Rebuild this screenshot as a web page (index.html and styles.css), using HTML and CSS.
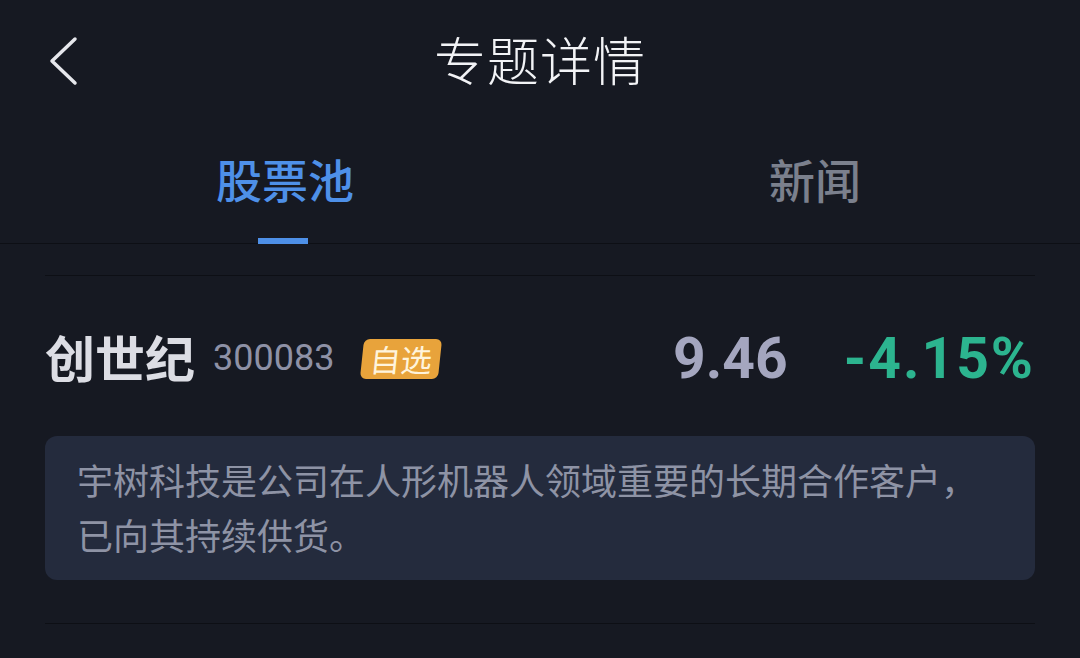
FILE: index.html
```html
<!DOCTYPE html>
<html lang="zh-CN">
<head>
    <meta charset="UTF-8">
    <meta name="viewport" content="width=device-width, initial-scale=1.0">
    <title>专题详情</title>
    <link rel="stylesheet" href="styles.css">
</head>
<body>

    <header class="topbar">
        <a class="back" href="#">
            <svg width="32" height="50" viewBox="0 0 32 50">
                <path d="M28 3 L5 25 L28 47" fill="none" stroke="#e6e7ec" stroke-width="3.5" stroke-linecap="round" stroke-linejoin="round"/>
            </svg>
        </a>
        <h1>专题详情</h1>
    </header>

    <nav class="tabs">
        <div class="tab active">股票池</div>
        <div class="tab">新闻</div>
    </nav>

    <section class="pool">
        <div class="stock">
            <div class="stock-name">
                <span class="name">创世纪</span>
                <span class="code">300083</span>
                <span class="badge">自选</span>
            </div>
            <div class="stock-quote">
                <span class="price">9.46</span>
                <span class="change">-4.15%</span>
            </div>
        </div>
        <div class="reason">
            宇树科技是公司在人形机器人领域重要的长期合作客户，<br>已向其持续供货。
        </div>
    </section>

</body>
</html>
```

FILE: styles.css
```css
body {
    margin: 0;
    background-color: #161922;
    font-family: "Noto Sans CJK SC", "Noto Sans", sans-serif;
    width: 1080px;
    height: 658px;
    overflow: hidden;
}
.topbar {
    height: 122px;
    display: flex;
    align-items: center;
    justify-content: center;
    position: relative;
}
.back {
    position: absolute;
    left: 47px;
    top: 36px;
    display: block;
}
.topbar h1 {
    margin: 0;
    margin-top: -6px;
    font-size: 52px;
    font-weight: 300;
    color: #f2f3f6;
    letter-spacing: 1px;
}
.tabs {
    display: flex;
    height: 121px;
    padding-left: 20px;
    border-bottom: 1px solid #0d0f15;
}
.tab {
    flex: 1;
    text-align: center;
    font-size: 46px;
    font-weight: 500;
    color: #7b808d;
    padding-top: 23px;
    position: relative;
}
.tab.active {
    color: #4e90e8;
}
.tab.active::after {
    content: "";
    position: absolute;
    left: 238px;
    bottom: -1px;
    width: 50px;
    height: 6px;
    background: #4e90e8;
}
.pool {
    margin: 31px 45px 0;
    border-top: 1px solid #0d0f15;
    border-bottom: 1px solid #0d0f15;
    padding-bottom: 43px;
}
.stock {
    display: flex;
    justify-content: space-between;
    align-items: center;
    height: 160px;
}
.stock-name {
    display: flex;
    align-items: center;
}
.name {
    font-size: 50px;
    font-weight: 700;
    color: #dcdde4;
}
.code {
    font-family: Roboto, "Noto Sans", sans-serif;
    font-size: 36px;
    color: #8e91a6;
    margin-left: 18px;
    margin-top: 4px;
}
.badge {
    margin-left: 28px;
    margin-top: 6px;
    background: #e8a33b;
    color: #fff4dc;
    font-size: 31px;
    line-height: 40px;
    padding: 0 8px;
    border-radius: 6px;
    transform: skewX(-6deg);
}
.stock-quote {
    display: flex;
    align-items: center;
    font-family: Roboto, "Noto Sans", sans-serif;
    font-weight: 700;
    font-size: 57px;
    margin-top: 4px;
}
.price {
    color: #a4a6bf;
}
.change {
    color: #2cb48f;
    margin-left: 56px;
    letter-spacing: 2px;
}
.reason {
    background: #242b3d;
    border-radius: 12px;
    padding: 16px 32px 18px;
    font-size: 36px;
    line-height: 55px;
    color: #8e93a5;
}
```
